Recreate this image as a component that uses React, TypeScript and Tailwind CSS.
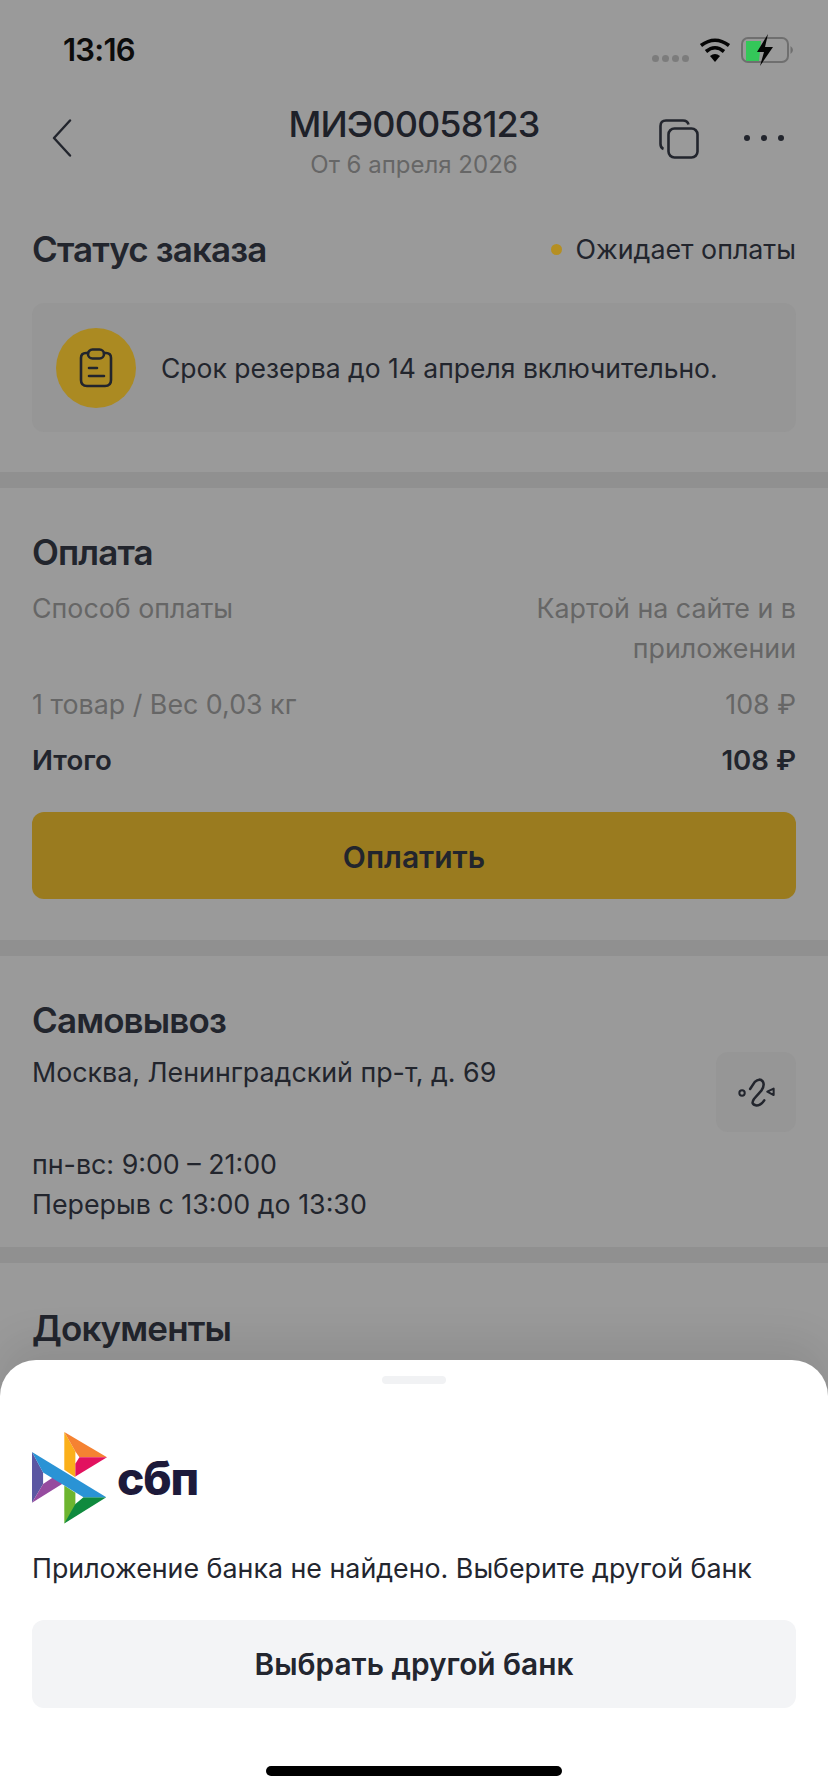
import React from 'react';

const Divider = () => <div className="h-4 bg-[#909090]" />;

const SbpLogo = () => (
  <svg width="75" height="92" viewBox="37 38 223 273" className="shrink-0">
    <polygon points="133,38 166,96 166,172 133,150" fill="#fbb01a" />
    <polygon points="133,38 260,113 178,113 166,96" fill="#f58232" />
    <polygon points="260,113 166,170 166,132 178,113" fill="#e2125f" />
    <polygon points="37,97 70,158 70,192 37,248" fill="#5b57a2" />
    <polygon points="37,248 130,190 100,172 70,192" fill="#964b9f" />
    <polygon points="133,197 166,218 166,272 133,310" fill="#6db52f" />
    <polygon points="133,310 258,232 190,232 166,252" fill="#0f8a3e" />
    <polygon points="37,97 258,232 190,232 70,158" fill="#2a93d5" />
  </svg>
);

export default function App() {
  return (
    <div className="relative h-[1792px] w-[828px] overflow-hidden bg-[#9a9a9a] font-['Inter',sans-serif] text-[#22252d]">
      <div className="flex h-[100px] items-center justify-between pl-[63px] pr-[33px]">
        <span className="text-[31px] font-semibold tracking-tight text-[#0c0c0c]">13:16</span>
        <div className="flex items-center">
          <div className="mt-4 flex gap-[3px]">
            <span className="h-[7px] w-[7px] rounded-full bg-[#7c7c7c]" />
            <span className="h-[7px] w-[7px] rounded-full bg-[#7c7c7c]" />
            <span className="h-[7px] w-[7px] rounded-full bg-[#7c7c7c]" />
            <span className="h-[7px] w-[7px] rounded-full bg-[#7c7c7c]" />
          </div>
          <svg width="32" height="25" viewBox="0 0 32 25" className="ml-[10px]">
            <path d="M16 24 L11 18 Q16 14 21 18 Z" fill="#050505" />
            <path d="M7 13.5 Q16 6 25 13.5" fill="none" stroke="#050505" strokeWidth="3.6" />
            <path d="M2 7.5 Q16 -3 30 7.5" fill="none" stroke="#050505" strokeWidth="3.6" />
          </svg>
          <svg width="54" height="34" viewBox="0 0 54 34" className="ml-[10px]">
            <rect x="1" y="5" width="46" height="24" rx="6" fill="none" stroke="#6f6f6f" strokeWidth="2" />
            <path d="M5 8 H20 L18 28 H5 Z" fill="#34c759" />
            <path d="M49.5 13 Q52 15 52 17 Q52 19 49.5 21 Z" fill="#6f6f6f" />
            <path d="M27 1 L16 19 H23 L19 33 L32 14 H24 Z" fill="#050505" />
          </svg>
        </div>
      </div>

      <div className="grid h-[72px] grid-cols-[1fr_auto_1fr]">
        <div className="pl-[52px] pt-[19px]">
          <svg width="20" height="38" viewBox="0 0 20 38" fill="none" stroke="#22252d" strokeWidth="2.4" strokeLinecap="round" strokeLinejoin="round">
            <path d="M18 1.5 L2 19 L18 36.5" />
          </svg>
        </div>
        <div className="flex flex-col items-center pt-1">
          <span className="text-[36px] font-medium leading-10 tracking-tight text-[#1e2129]">МИЭ00058123</span>
          <span className="mt-[7px] text-[24px] leading-7 text-[#666666]">От 6 апреля 2026</span>
        </div>
        <div className="flex justify-end pt-[19px]">
          <svg width="40" height="40" viewBox="0 0 40 40" fill="none" stroke="#22252d" strokeWidth="2.6" className="mr-[45px]">
            <rect x="9.5" y="9.5" width="29" height="29" rx="6" />
            <path d="M4.5 30 Q1.5 29 1.5 25 V7 Q1.5 1.5 7 1.5 H24 Q28.5 1.5 29.5 5.5" />
          </svg>
          <div className="mr-[44px] mt-[16px] flex h-[6px] gap-[11px]">
            <span className="h-[6px] w-[6px] rounded-full bg-[#22252d]" />
            <span className="h-[6px] w-[6px] rounded-full bg-[#22252d]" />
            <span className="h-[6px] w-[6px] rounded-full bg-[#22252d]" />
          </div>
        </div>
      </div>

      <div className="px-8 pb-10">
        <div className="mt-[57px] flex h-10 items-center justify-between">
          <h2 className="text-[35px] font-semibold tracking-tight">Статус заказа</h2>
          <div className="flex items-center gap-[14px]">
            <span className="h-[11px] w-[11px] rounded-full bg-[#b58f22]" />
            <span className="text-[26.8px]">Ожидает оплаты</span>
          </div>
        </div>
        <div className="mt-[34px] flex h-[129px] items-center gap-[25px] rounded-xl bg-[#969696] pl-6">
          <div className="flex h-20 w-20 items-center justify-center rounded-full bg-[#ab8a22]">
            <svg width="34" height="40" viewBox="0 0 34 40" fill="none" stroke="#22252d" strokeWidth="2.6" strokeLinecap="round">
              <path d="M9 5 H7 Q2 5 2 10 V32 Q2 38 8 38 H26 Q32 38 32 32 V10 Q32 5 27 5 H25" />
              <rect x="9" y="1.5" width="16" height="9" rx="4.5" />
              <path d="M10 20 H18 M10 28 H25" />
            </svg>
          </div>
          <span className="pt-[3px] text-[26.5px]">Срок резерва до 14 апреля включительно.</span>
        </div>
      </div>

      <Divider />

      <div className="px-8 pb-[41px] pt-[44px]">
        <h2 className="text-[35px] font-semibold leading-10 tracking-tight">Оплата</h2>
        <div className="mt-[16px] flex justify-between text-[26.8px] leading-10 text-[#666666]">
          <span>Способ оплаты</span>
          <span className="w-[300px] text-right">Картой на сайте и в приложении</span>
        </div>
        <div className="mt-4 flex justify-between text-[26.8px] leading-10 text-[#666666]">
          <span>1 товар / Вес 0,03 кг</span>
          <span>108 ₽</span>
        </div>
        <div className="mt-4 flex justify-between text-[27.6px] font-semibold leading-10">
          <span>Итого</span>
          <span>108 ₽</span>
        </div>
        <div className="mt-[32px] flex h-[87px] items-center justify-center rounded-xl bg-[#9a7b1f] pt-[3px] text-[30px] font-semibold">
          Оплатить
        </div>
      </div>

      <Divider />

      <div className="px-8 pb-[23px] pt-[44px]">
        <h2 className="text-[35px] font-semibold leading-10 tracking-tight">Самовывоз</h2>
        <div className="flex justify-between">
          <div className="text-[26.8px] leading-10">
            <div className="mt-3">Москва, Ленинградский пр-т, д. 69</div>
            <div className="mt-[52px]">пн-вс: 9:00 – 21:00</div>
            <div>Перерыв с 13:00 до 13:30</div>
          </div>
          <div className="mt-3 flex h-20 w-20 items-center justify-center rounded-xl bg-[#969696]">
            <svg width="37" height="30" viewBox="110 142 110 86" fill="none" stroke="#22252d" strokeLinecap="round" strokeLinejoin="round">
              <circle cx="122" cy="188" r="8" strokeWidth="6" />
              <path d="M146 176 L160 155 Q174 142 184 154 Q190 165 180 180 L158 205 Q146 222 165 225 Q178 225 188 210" strokeWidth="7.5" />
              <path d="M197 184 L216 175 V194 Z" strokeWidth="6" />
            </svg>
          </div>
        </div>
      </div>

      <Divider />

      <div className="px-8 pt-[45px]">
        <h2 className="text-[35px] font-semibold leading-10 tracking-tight">Документы</h2>
      </div>

      <div className="absolute inset-x-0 bottom-0 h-[432px] rounded-t-[36px] bg-white px-8 shadow-[0_-20px_40px_rgba(0,0,0,0.08)]">
        <div className="mx-auto mt-4 h-2 w-16 rounded-full bg-[#f1f2f4]" />
        <div className="mt-[48px] flex items-center gap-[10px]">
          <SbpLogo />
          <span className="text-[46px] font-extrabold leading-none tracking-tight text-[#1d1a3a]">сбп</span>
        </div>
        <p className="mt-[24px] text-[26.8px] leading-10 text-[#23262f]">Приложение банка не найдено. Выберите другой банк</p>
        <div className="mt-[32px] flex h-[88px] items-center justify-center rounded-xl bg-[#f3f4f6] pt-[1px] text-[29.8px] font-semibold text-[#23262f]">
          Выбрать другой банк
        </div>
      </div>
      <div className="absolute bottom-4 left-[266px] h-[10px] w-[296px] rounded-full bg-black" />
    </div>
  );
}
